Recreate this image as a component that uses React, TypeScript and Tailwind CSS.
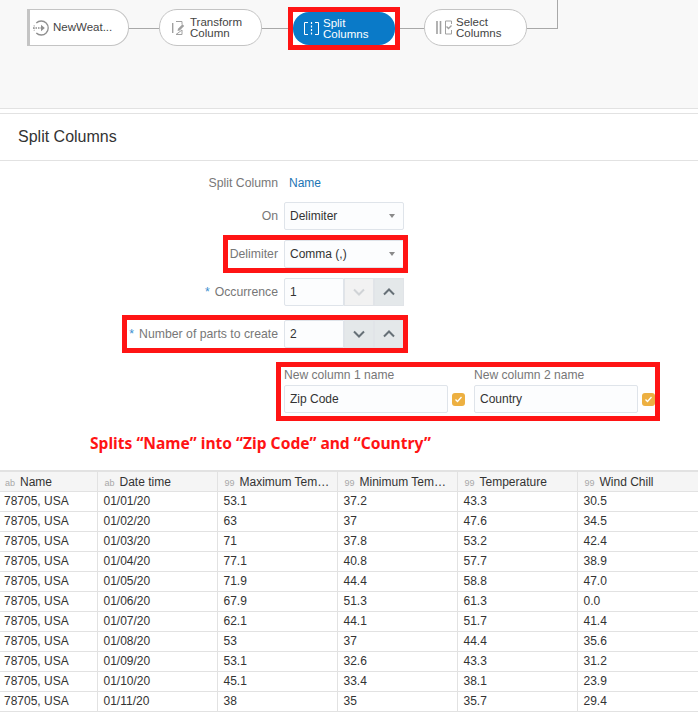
const columns = [
  { label: "Name", kind: "ab", width: "w-[97px]" },
  { label: "Date time", kind: "ab", width: "w-[120px]" },
  { label: "Maximum Tem…", kind: "99", width: "w-[120px]" },
  { label: "Minimum Tem…", kind: "99", width: "w-[120px]" },
  { label: "Temperature", kind: "99", width: "w-[120px]" },
  { label: "Wind Chill", kind: "99", width: "w-[121px]" },
];

const rows = [
  ["78705, USA", "01/01/20", "53.1", "37.2", "43.3", "30.5"],
  ["78705, USA", "01/02/20", "63", "37", "47.6", "34.5"],
  ["78705, USA", "01/03/20", "71", "37.8", "53.2", "42.4"],
  ["78705, USA", "01/04/20", "77.1", "40.8", "57.7", "38.9"],
  ["78705, USA", "01/05/20", "71.9", "44.4", "58.8", "47.0"],
  ["78705, USA", "01/06/20", "67.9", "51.3", "61.3", "0.0"],
  ["78705, USA", "01/07/20", "62.1", "44.1", "51.7", "41.4"],
  ["78705, USA", "01/08/20", "53", "37", "44.4", "35.6"],
  ["78705, USA", "01/09/20", "53.1", "32.6", "43.3", "31.2"],
  ["78705, USA", "01/10/20", "45.1", "33.4", "38.1", "23.9"],
  ["78705, USA", "01/11/20", "38", "35", "35.7", "29.4"],
];

function DatasetIcon() {
  return (
    <svg width="16" height="16" viewBox="0 0 16 16" fill="none" stroke="#8f8f8f" strokeWidth="1.300">
      <path d="M3.300 3A7 7 0 1 1 3.300 13" />
      <path d="M1.400 5.500A7 7 0 0 0 1.400 10.500" strokeDasharray="1 1.200" />
      <path d="M0 8h8" strokeDasharray="1.500 1" />
      <path d="M8 4.800v6.400l3.800-3.200z" fill="#8f8f8f" stroke="none" />
    </svg>
  );
}

function TransformIcon() {
  return (
    <svg width="13" height="16" viewBox="0 0 13 16" fill="none" stroke="#a0a0a0" strokeWidth="1">
      <path d="M.7 3v10" strokeWidth="1.400" />
      <path d="M4 1.500h6v3M10 10v4.500H4z" />
      <path d="M5.500 11 6 8.800 10.500 4.300l1.700 1.700-4.500 4.500z" fill="#a0a0a0" stroke="none" />
    </svg>
  );
}

function SplitIcon() {
  return (
    <svg width="15" height="15" viewBox="0 0 15 15" fill="none" stroke="#ffffff" strokeWidth="1">
      <path d="M4 1.500H.5v12H4M11 1.500h3.500v12H11" />
      <path d="M7.500 1v13" strokeDasharray="2 1.500" strokeWidth="1.200" />
    </svg>
  );
}

function SelectIcon() {
  return (
    <svg width="16" height="15" viewBox="0 0 16 15" fill="none" stroke="#a0a0a0">
      <path d="M1 1v13M4.500 1v13" strokeWidth="1.600" />
      <path d="M9.500 1v13h6v-4M9.500 1h6v3" strokeWidth="1" />
      <path d="m10.500 6.500 2 2 3-3" strokeWidth="1.400" />
    </svg>
  );
}

function Node({ children, icon, className }: { children: React.ReactNode; icon: React.ReactNode; className: string }) {
  return (
    <div className={`flex h-[37px] items-center border border-[#c4c4c4] bg-white text-[11.500px] leading-[11px] text-[#444] ${className}`}>
      {icon}
      <div>{children}</div>
    </div>
  );
}

function Select({ value }: { value: string }) {
  return (
    <div className="flex h-[28px] w-[120px] items-center justify-between rounded-[2px] border border-[#dfe4ea] bg-[#fcfdfe] pl-[5px] pr-[8px] text-[#333]">
      {value}
      <span className="h-0 w-0 border-x-[3.500px] border-t-[4px] border-x-transparent border-t-[#8a8a8a]" />
    </div>
  );
}

function StepButton({ up, disabled }: { up?: boolean; disabled?: boolean }) {
  return (
    <div className={`flex h-[28px] w-[30px] items-center justify-center border border-[#e1e4e8] ${disabled ? "bg-[#f2f2f2]" : "bg-[#e4e8ea]"}`}>
      <svg width="12" height="8" viewBox="0 0 12 8" fill="none" stroke={disabled ? "#d0d3d6" : "#667077"} strokeWidth="2">
        <path d={up ? "M1 6.500 6 1.500l5 5" : "M1 1.500l5 5 5-5"} />
      </svg>
    </div>
  );
}

function Stepper({ value, disabled }: { value: string; disabled?: boolean }) {
  return (
    <div className="flex w-[120px]">
      <div className="flex h-[28px] w-[60px] items-center rounded-l-[2px] border border-[#dfe4ea] bg-[#fcfdfe] pl-[5px] text-[#333]">{value}</div>
      <StepButton disabled={disabled} />
      <StepButton up />
    </div>
  );
}

function Label({ children, required }: { children: React.ReactNode; required?: boolean }) {
  return (
    <div className="whitespace-nowrap text-right text-[12.250px] text-[#777]">
      {required && <span className="mr-[5px] text-[#3a8fd0]">*</span>}
      {children}
    </div>
  );
}

function NameField({ label, value }: { label: string; value: string }) {
  return (
    <div>
      <div className="mb-[3px] h-[14px] text-[12.100px] leading-[14px] text-[#777]">{label}</div>
      <div className="flex items-center gap-[4px]">
        <div className="flex h-[28px] w-[164px] items-center rounded-[2px] border border-[#dfe4ea] bg-[#fcfdfe] pl-[5px] text-[#333]">{value}</div>
        <div className="flex h-[13px] w-[13px] items-center justify-center rounded-[3px] bg-[#edb041]">
          <svg width="9" height="9" viewBox="0 0 9 9" fill="none" stroke="#ffffff" strokeWidth="1.300">
            <path d="m1.500 4.500 2 2 4-4.500" />
          </svg>
        </div>
      </div>
    </div>
  );
}

export default function App() {
  return (
    <div className="h-[714px] w-[698px] overflow-hidden bg-white font-['Liberation_Sans',sans-serif] text-[12px]">
      <div className="h-[109px] border-b border-[#e2e2e2] bg-[#f8f8f8] pl-[27px] pt-[9px]">
        <div className="flex items-start">
          <Node className="w-[102px] gap-[4px] rounded-r-[18px] border-l-[3px] pl-[3px]" icon={<DatasetIcon />}>
            NewWeat...
          </Node>
          <div className="mt-[19px] h-px w-[30px] bg-[#a8a8a8]" />
          <Node className="w-[103px] gap-[5px] rounded-[18px] pl-[12px]" icon={<TransformIcon />}>
            Transform
            <br />
            Column
          </Node>
          <div className="mt-[19px] h-px w-[26px] bg-[#a8a8a8]" />
          <div className="-mt-[2px] h-[43px] w-[112px] border-[5px] border-[#ff1414] bg-white">
            <div className="flex h-[33px] items-center gap-[4px] rounded-[16px] bg-[#0a7ac8] pl-[11px] text-[11.500px] leading-[11px] text-white">
              <SplitIcon />
              <div>
                Split
                <br />
                Columns
              </div>
            </div>
          </div>
          <div className="mt-[19px] h-px w-[24px] bg-[#a8a8a8]" />
          <Node className="w-[103px] gap-[4px] rounded-[18px] pl-[11px]" icon={<SelectIcon />}>
            Select
            <br />
            Columns
          </Node>
          <div className="-mt-[9px] h-[29px] w-[31px] border-b border-r border-[#a8a8a8]" />
        </div>
      </div>

      <div className="mt-[4px] flex h-[48px] items-center border-y border-[#e2e2e2] pl-[18px] text-[16px] text-[#333]">Split Columns</div>

      <div className="w-[698px] pt-[13px]">
        <div className="grid grid-cols-[278px_120px] items-center gap-x-[6px]">
          <Label>Split Column</Label>
          <div className="pl-[5px] text-[#1c75b4]">Name</div>
        </div>
        <div className="mt-[10px] grid grid-cols-[278px_120px] items-center gap-x-[6px]">
          <Label>On</Label>
          <Select value="Delimiter" />
        </div>
        <div className="ml-[228px] mt-[10px] grid w-[175px] grid-cols-[50px_120px] items-center gap-x-[6px] bg-white outline-[5px] outline-[#ff1414]">
          <Label>Delimiter</Label>
          <Select value="Comma (,)" />
        </div>
        <div className="mt-[10px] grid grid-cols-[278px_120px] items-center gap-x-[6px]">
          <Label required>Occurrence</Label>
          <Stepper value="1" disabled />
        </div>
        <div className="ml-[127px] mt-[14px] grid w-[276px] grid-cols-[151px_120px] items-center gap-x-[6px] outline-[5px] outline-[#ff1414]">
          <Label required>Number of parts to create</Label>
          <Stepper value="2" />
        </div>
        <div className="ml-[281px] mt-[19px] flex h-[49px] w-[374px] gap-[9px] pl-[3px] pt-[1px] outline-[5px] outline-[#ff1414]">
          <NameField label="New column 1 name" value="Zip Code" />
          <NameField label="New column 2 name" value="Country" />
        </div>
        <div className="ml-[90px] mt-[17px] font-['Noto_Sans',sans-serif] text-[15.600px] font-bold leading-[20px] text-[#ff1414]">
          Splits “Name” into “Zip Code” and “Country”
        </div>
      </div>

      <table className="mt-[17px] w-[698px] table-fixed border-collapse border-t-2 border-[#e2e2e2] text-[12px] text-[#333]">
        <thead>
          <tr className="h-[20px] bg-[#f5f5f5]">
            {columns.map((col) => (
              <th key={col.label} className={`${col.width} border border-l-0 border-[#e2e2e2] pl-[7px] text-left font-normal first:pl-[5px] last:border-r-0`}>
                <span className="mr-[5px] inline-block w-[10px] text-[9px] text-[#a8a8a8]">{col.kind}</span>
                {col.label}
              </th>
            ))}
          </tr>
        </thead>
        <tbody>
          {rows.map((row) => (
            <tr key={row[1]} className="h-[20px]">
              {row.map((cell, i) => (
                <td key={i} className="border border-l-0 border-[#e2e2e2] pl-[6px] first:pl-[4px] last:border-r-0">
                  {cell}
                </td>
              ))}
            </tr>
          ))}
        </tbody>
      </table>
    </div>
  );
}
